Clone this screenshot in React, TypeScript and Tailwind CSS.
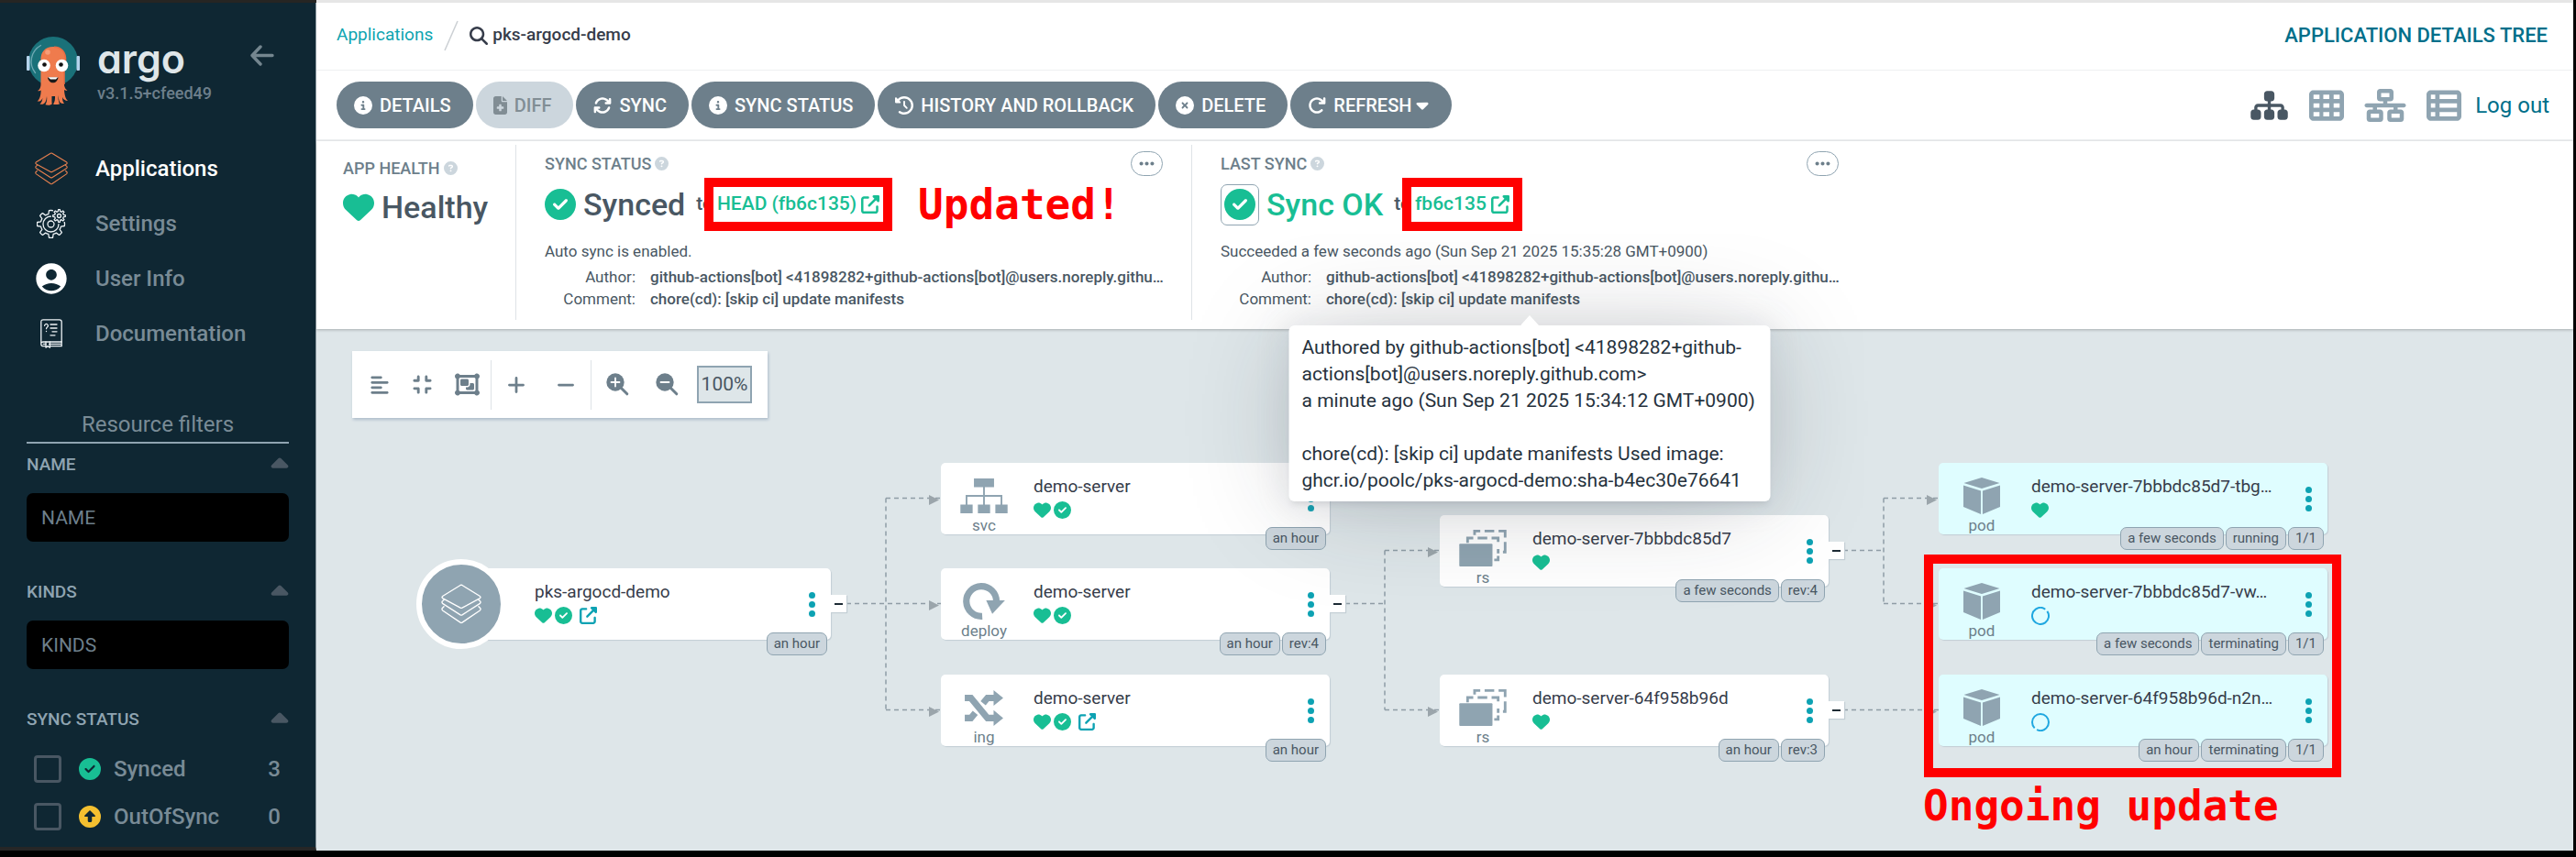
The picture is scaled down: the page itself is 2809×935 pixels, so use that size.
import React from "react";
import {
  FaAlignLeft,
  FaArrowRotateRight,
  FaArrowsRotate,
  FaCaretDown,
  FaCaretUp,
  FaCircleCheck,
  FaCircleInfo,
  FaCircleQuestion,
  FaCircleUp,
  FaCircleXmark,
  FaClockRotateLeft,
  FaCompress,
  FaEllipsis,
  FaFileMedical,
  FaHeart,
  FaMagnifyingGlass,
  FaMinus,
  FaNetworkWired,
  FaObjectGroup,
  FaPlus,
  FaSitemap,
  FaTableCells,
  FaTableList,
  FaUpRightFromSquare,
} from "react-icons/fa6";
import { MdAccountCircle } from "react-icons/md";

/* ---------- drawings ---------- */

function ArgoMascot() {
  return (
    <svg viewBox="0 0 58 75" className="h-[75px] w-[58px] shrink-0" aria-hidden="true">
      <circle cx="29" cy="27" r="27" fill="#1a7179" />
      <path d="M15.500 9.500A20 20 0 0 0 9.500 39.500" fill="none" stroke="#6fa9b3" strokeWidth="1.300" strokeLinecap="round" />
      <rect x="0" y="21" width="3.500" height="16" rx="1" fill="#b5d3ec" />
      <rect x="54.500" y="21" width="3.500" height="16" rx="1" fill="#b5d3ec" />
      <path
        d="M15.500 26C15 17 20 11 29 11s14 6 13.500 15c-.3 5-1.500 8-1.500 12v15c.5 3 2 5 3.500 5.500-1.500.5-2.500.3-3.500-.5.300 5 1.500 10 4 12-3-.2-5-1.500-6-4 0 3 .500 5 2 7-3 .5-4.500-1-5.500-3-.500-2-.800-4-1-6-.200 3 0 6 1.500 9.500-3 .8-5.500.8-7 0C31 71 31 68 31 65h-3.500c0 3-.2 6 .2 8.500-2 1.500-5 1.500-7.200.8 1.700-3.300 2-6 1.500-9.300-.2 2.500-.7 5-1.700 6.500-1.300 2-3.300 2.800-5.800 2 1.800-1.500 2.600-3.500 2.900-6.500-1.200 2.800-3 4-5.900 3.500 3-2 4-6.500 4.200-12-1 .8-2.200 1-3.700.5 2-.8 3.200-3 3.500-6V38c0-4-1.200-7-1.500-12z"
        fill="#ef7b4d"
      />
      <path d="M30 11.200c8 0 13 6 12.500 14.800-.3 5-1.500 8-1.500 12v14" fill="none" stroke="#e96d44" strokeWidth="1.500" />
      <circle cx="23" cy="17" r="2.800" fill="#f79d78" />
      <circle cx="19" cy="31.500" r="6.800" fill="#fff" />
      <circle cx="38.500" cy="31.500" r="6.800" fill="#fff" />
      <circle cx="19.500" cy="30.500" r="2.300" fill="#111" />
      <circle cx="37.500" cy="30.500" r="2.300" fill="#111" />
      <path d="M23 44.500h11.500c-.5 3.500-3 5.800-5.700 5.800S23.500 48 23 44.500z" fill="#1b1b1b" />
      <path d="M23.500 44.300h10.500l-2 2.200h-6z" fill="#fff" />
    </svg>
  );
}

function LayersIcon({ className }: { className: string }) {
  return (
    <svg viewBox="0 0 36 36" className={className} fill="none" stroke="currentColor" strokeWidth="1.100" strokeLinejoin="round" strokeLinecap="round" aria-hidden="true">
      <path d="M17.200 1.200 1.600 10.800q-1.600 1.100 0 2.200l15.600 8.400q.8.400 1.600 0L34.400 13q1.600-1.100 0-2.200L18.800 1.200q-.8-.4-1.600 0z" />
      <path d="M2.500 14.300 1.300 15.400q-1.200 1 .3 2.300l15.600 10q.8.400 1.600 0l15.600-10q1.500-1.300.3-2.300l-1.200-1.100" />
      <path d="M2.500 20.300 1.300 21.500q-1.200 1.200.3 2.400l15.600 10.600q.8.500 1.600 0l15.600-10.600q1.500-1.200.3-2.400l-1.200-1.200" />
    </svg>
  );
}

function gearPath(cx: number, cy: number, outer: number, inner: number, teeth: number) {
  const step = (Math.PI * 2) / teeth;
  const at = (r: number, a: number) => `${(cx + r * Math.cos(a)).toFixed(2)} ${(cy + r * Math.sin(a)).toFixed(2)}`;
  let d = "";
  for (let i = 0; i < teeth; i += 1) {
    const a = i * step + Math.PI / 2;
    d += `${i === 0 ? "M" : "L"}${at(inner, a - step * 0.3)}L${at(outer, a - step * 0.17)}A${outer} ${outer} 0 0 1 ${at(outer, a + step * 0.17)}L${at(inner, a + step * 0.3)}A${inner} ${inner} 0 0 1 ${at(inner, a + step * 0.7)}`;
  }
  return `${d}Z`;
}

function GearsIcon() {
  return (
    <svg viewBox="0 0 32 32" className="size-8" fill="none" stroke="#eef3f6" strokeWidth="1.300" strokeLinejoin="round" aria-hidden="true">
      <path d={gearPath(15.5, 16.5, 15, 11.3, 8)} />
      <circle cx="15.500" cy="16.500" r="8.500" />
      <circle cx="15.500" cy="16.500" r="3.500" />
      <circle cx="24.500" cy="7.500" r="8.800" fill="#0f2733" stroke="none" />
      <path d={gearPath(24.5, 7.5, 6.8, 4.9, 8)} />
      <circle cx="24.500" cy="7.500" r="2" />
    </svg>
  );
}

function DocsIcon() {
  return (
    <svg viewBox="0 0 24 32" className="h-8 w-6" fill="none" stroke="#eef3f6" strokeWidth="1.300" strokeLinecap="round" strokeLinejoin="round" aria-hidden="true">
      <path d="M.8 27V3.200Q.8.800 3.200.800h17.600q2.400 0 2.400 2.400V25H3.200Q.8 25 .8 27.200q0 2.500 2.400 2.500H6" />
      <path d="M11 29.700h12.200V25M9.500 27.300h12.500M3.200 27.300H6" />
      <path d="M6 25v6.200l2.200-1.800 2.200 1.800V25" />
      <path d="M4.600 7.300a1.900 1.900 0 1 1 2.900 1.700q-1 .6-1 1.700M6.500 13.300v.2M11 6h7M11 10h7M13 13.800h5M11 17.800h5" />
    </svg>
  );
}

function BackArrow() {
  return (
    <svg viewBox="0 0 26 23" className="h-[23px] w-[26px]" fill="none" stroke="#74868f" strokeWidth="3.400" strokeLinecap="round" strokeLinejoin="round" aria-hidden="true">
      <path d="M24 11.500H2.200M11 2 2 11.500 11 21" />
    </svg>
  );
}

function ZoomIcon({ plus }: { plus?: boolean }) {
  return (
    <svg viewBox="0 0 25 25" className="size-[25px]" fill="none" aria-hidden="true">
      <circle cx="10" cy="10" r="9.700" fill="#6d7f8b" />
      <path d="m16 16 6.800 6.800" stroke="#6d7f8b" strokeWidth="3" strokeLinecap="round" />
      <path d={plus ? "M5.500 10h9M10 5.500v9" : "M5.500 10h9"} stroke="#fff" strokeWidth="1.800" strokeLinecap="round" />
    </svg>
  );
}

function KindIcon({ kind }: { kind: string }) {
  if (kind === "svc") {
    return (
      <svg viewBox="0 0 54 42" className="h-[42px] w-[54px]" fill="#8fa4b1" aria-hidden="true">
        <path d="M15.500 1h23v10h-23zM0 31h14v10H0zM20 31h14v10H20zM40 31h14v10H40zM26 11h2v20h-2zM6 20h42v2H6zM6 20h2v11H6zM46 20h2v11h-2z" />
      </svg>
    );
  }
  if (kind === "deploy") {
    return (
      <svg viewBox="0 0 54 42" className="h-[42px] w-[54px]" aria-hidden="true">
        <path d="M25 38.200A17.200 17.200 0 1 1 41.200 21" fill="none" stroke="#8fa4b1" strokeWidth="7.500" />
        <path d="M29.500 20H51L36.500 35.500z" fill="#8fa4b1" />
      </svg>
    );
  }
  if (kind === "ing") {
    return (
      <svg viewBox="0 0 54 42" className="h-[42px] w-[54px]" aria-hidden="true">
        <path d="M5 10h7l19 23h8M5 33h7l5-6M26 16l5-6h8" fill="none" stroke="#8fa4b1" strokeWidth="7.500" />
        <path d="M38 1l11 9-11 9zM38 24l11 9-11 9z" fill="#8fa4b1" />
      </svg>
    );
  }
  if (kind === "rs") {
    return (
      <svg viewBox="0 0 54 42" className="h-[42px] w-[54px]" aria-hidden="true">
        <g fill="none" stroke="#8fa4b1" strokeWidth="3">
          <path d="M17.500 6V1.500H24M29 1.500h11M45 1.500h7.500V9M52.500 14v11.500H50" />
          <path d="M9.500 15v-5.500H16M21 9.500h11M37 9.500h7.500V14M44.500 22v5M44.500 30v4.500H40" />
        </g>
        <rect x="0" y="16" width="38" height="26" rx="1" fill="#8fa4b1" />
      </svg>
    );
  }
  return (
    <svg viewBox="0 0 54 42" className="h-[42px] w-[54px]" fill="#8fa4b1" aria-hidden="true">
      <path d="M27 0 47.500 6.300 27 12.600 6.500 6.300zM6 9l20 6.200V42L6 33.500zM48 9l-20 6.200V42l20-8.500z" />
    </svg>
  );
}

function Spinner({ angle }: { angle: number }) {
  return (
    <svg viewBox="0 0 20 20" className="size-5" fill="none" aria-hidden="true">
      <circle cx="10" cy="10" r="9" stroke="#1fa7e0" strokeWidth="2" strokeDasharray="53.200 3.350" transform={`rotate(${angle} 10 10)`} />
    </svg>
  );
}

/* ---------- sidebar ---------- */

const navItems = [
  { label: "Applications", icon: <LayersIcon className="size-9 text-[#e8804f]" />, active: true },
  { label: "Settings", icon: <GearsIcon /> },
  { label: "User Info", icon: <MdAccountCircle className="size-10 text-white" /> },
  { label: "Documentation", icon: <DocsIcon /> },
];

function FilterHeading({ title }: { title: string }) {
  return (
    <div className="flex h-6 items-center justify-between text-[19px] font-medium text-[#8fa4b1]">
      <h3>{title}</h3>
      <FaCaretUp className="-mr-[5px] size-[30px] text-[#495763]" />
    </div>
  );
}

function FilterInput({ name }: { name: string }) {
  return (
    <section className="mb-[43px]">
      <FilterHeading title={name} />
      <input
        aria-label={name}
        placeholder={name}
        className="mt-[19px] block h-[53px] w-full rounded-[7px] bg-black px-4 text-[21px] text-white outline-none placeholder:text-[#6d7f8b]"
      />
    </section>
  );
}

function Sidebar() {
  return (
    <aside className="w-[345px] shrink-0 border-r border-b-4 border-[#8b989f] border-b-[#262626] bg-[#0f2733] px-[29px]">
      <div className="flex h-[151px] items-start pt-[37px]">
        <ArgoMascot />
        <div className="ml-[19px] flex flex-1 flex-col">
          <div className="flex justify-between">
            <span className="font-['Inter',sans-serif] text-[43px] leading-[48px] font-semibold text-[#dfe6e9] [font-feature-settings:'cv11']">argo</span>
            <button type="button" aria-label="Collapse sidebar" className="mt-[9px] mr-4 self-start">
              <BackArrow />
            </button>
          </div>
          <span className="pt-[2px] text-[18px] leading-6 font-medium text-[#6d7f8b]">v3.1.5+cfeed49</span>
        </div>
      </div>
      <nav>
        {navItems.map((item) => (
          <a key={item.label} href="#" className="flex h-[60px] items-center gap-7 pl-[7px]">
            <span className="flex w-10 justify-center">{item.icon}</span>
            <span className={item.active ? "text-2xl font-medium text-white" : "text-2xl font-medium text-[#798b96]"}>{item.label}</span>
          </a>
        ))}
      </nav>
      <h2 className="mt-[50px] mb-[11px] border-b-2 border-[#8fa4b1] text-center text-2xl leading-[38px] text-[#798b96]">Resource filters</h2>
      <FilterInput name="NAME" />
      <FilterInput name="KINDS" />
      <FilterHeading title="SYNC STATUS" />
      <div className="mt-4">
        {[
          { label: "Synced", count: 3, icon: <FaCircleCheck className="size-6 text-[#18be94]" /> },
          { label: "OutOfSync", count: 0, icon: <FaCircleUp className="size-6 text-[#f4c030]" /> },
        ].map((row) => (
          <label key={row.label} className="flex h-[52px] items-center pr-[9px] pl-2 text-2xl font-medium text-[#798b96]">
            <input type="checkbox" className="size-[30px] appearance-none rounded-[4px] border-[3px] border-[#495763]" />
            <span className="mr-[14px] ml-[19px]">{row.icon}</span>
            <span className="flex-1">{row.label}</span>
            <span>{row.count}</span>
          </label>
        ))}
      </div>
    </aside>
  );
}

/* ---------- header ---------- */

const actions = [
  { label: "DETAILS", icon: FaCircleInfo },
  { label: "DIFF", icon: FaFileMedical, disabled: true },
  { label: "SYNC", icon: FaArrowsRotate },
  { label: "SYNC STATUS", icon: FaCircleInfo },
  { label: "HISTORY AND ROLLBACK", icon: FaClockRotateLeft },
  { label: "DELETE", icon: FaCircleXmark },
  { label: "REFRESH", icon: FaArrowRotateRight, caret: true },
];

function TopBar() {
  return (
    <header>
      <div className="flex h-[74px] items-center border-b border-[#eef0f2] pr-7 pb-[2px] pl-[22px] text-[19px]">
        <a href="#" className="text-[#0da4b0]">Applications</a>
        <svg viewBox="0 0 16 34" className="mx-3 h-[34px] w-4" aria-hidden="true">
          <path d="M1 33 15 1" stroke="#ccd0d4" strokeWidth="1.500" />
        </svg>
        <FaMagnifyingGlass className="mr-[5px] size-5 text-[#363c4a]" />
        <span className="font-medium text-[#363c4a]">pks-argocd-demo</span>
        <h1 className="ml-auto text-[22px] font-medium text-[#006f8a]">APPLICATION DETAILS TREE</h1>
      </div>
      <div className="flex h-[77px] items-center border-b-2 border-[#eef0f2] pr-[26px] pl-[22px]">
        <div className="flex gap-[3px]">
          {actions.map((a) => (
            <button
              key={a.label}
              type="button"
              disabled={a.disabled}
              className={
                a.disabled
                  ? "flex h-[51px] items-center rounded-full bg-[#ccd6dd] pr-6 pl-[19px] text-[20px] font-medium text-[#818d94]"
                  : "flex h-[51px] items-center rounded-full bg-[#6d7f8b] pr-6 pl-[19px] text-[20px] font-medium text-white"
              }
            >
              <a.icon className={a.disabled ? "mr-2 h-5 w-[15px]" : "mr-2 size-5"} />
              {a.label}
              {a.caret && <FaCaretDown className="ml-1 h-[21px] w-4" />}
            </button>
          ))}
        </div>
        <div className="ml-auto flex items-center text-[#8fa4b1]">
          <button type="button" aria-label="Tree view" className="mr-[22px] text-[#495763]"><FaSitemap className="h-9 w-[43px]" /></button>
          <button type="button" aria-label="Pods view" className="mr-[22px]"><FaTableCells className="size-[38px]" /></button>
          <button type="button" aria-label="Network view" className="mr-[22px]"><FaNetworkWired className="h-9 w-[46px]" /></button>
          <button type="button" aria-label="List view" className="mr-[15px]"><FaTableList className="size-[38px]" /></button>
          <a href="#" className="text-2xl text-[#006f8a]">Log out</a>
        </div>
      </div>
    </header>
  );
}

/* ---------- status panel ---------- */

function PanelTitle({ title, more }: { title: string; more?: boolean }) {
  return (
    <div className="flex h-6 items-center text-[18px] font-medium text-[#6d7f8b]">
      <h2>{title}</h2>
      <FaCircleQuestion className="ml-1 size-[15px] text-[#ccd6dd]" />
      {more && (
        <button type="button" aria-label="More" className="ml-auto flex h-[27px] w-[35px] items-center justify-center rounded-full border border-[#8fa4b1]">
          <FaEllipsis className="size-[19px]" />
        </button>
      )}
    </div>
  );
}

function RevisionLink({ text, note }: { text: string; note?: string }) {
  return (
    <span className="relative ml-1 flex items-center">
      <a href="#" className="flex items-center gap-[5px] text-[21px] font-medium text-[#18be94]">
        {text}
        <FaUpRightFromSquare className="size-5" />
      </a>
      <span className="pointer-events-none absolute -inset-x-[14px] -inset-y-[13px] border-[10px] border-[#ff0000]" />
      {note && (
        <span className="absolute left-full ml-[42px] font-['DejaVu_Sans_Mono',monospace] text-[46px] leading-none font-bold text-[#ff0000]">{note}</span>
      )}
    </span>
  );
}

function CommitInfo() {
  return (
    <dl className="mt-1 grid grid-cols-[99px_minmax(0,1fr)] gap-x-4 text-[17px] leading-6">
      <dt className="text-right">Author:</dt>
      <dd className="font-medium whitespace-nowrap">github-actions[bot] &lt;41898282+github-actions[bot]@users.noreply.githu…</dd>
      <dt className="text-right">Comment:</dt>
      <dd className="font-medium whitespace-nowrap">chore(cd): [skip ci] update manifests</dd>
    </dl>
  );
}

function CommitTooltip() {
  return (
    <div
      role="tooltip"
      className="absolute top-[197px] left-1/2 z-20 w-[525px] -translate-x-1/2 rounded-[6px] bg-white px-[14px] pt-[10px] pb-2 text-[21px] leading-[29px] text-[#26323d] shadow-[0_0_30px_6px_rgba(154,161,177,0.15),0_6px_120px_-12px_rgba(36,40,47,0.25),0_6px_6px_-3px_rgba(91,94,105,0.15)]"
    >
      <span className="absolute -top-[11px] left-1/2 -ml-[10px] h-[11px] w-5 bg-white [clip-path:polygon(50%_0,100%_100%,0_100%)]" />
      <p>
        Authored by github-actions[bot] &lt;41898282+github-
        <br />
        actions[bot]@users.noreply.github.com&gt;
      </p>
      <p>a minute ago (Sun Sep 21 2025 15:34:12 GMT+0900)</p>
      <p className="mt-[29px]">
        chore(cd): [skip ci] update manifests Used image:
        <br />
        ghcr.io/poolc/pks-argocd-demo:sha-b4ec30e76641
      </p>
    </div>
  );
}

function StatusPanel() {
  return (
    <section className="relative z-10 flex bg-white pt-1 pb-[10px] text-[#495763] shadow-[0_1px_3px_rgba(0,0,0,0.25)]">
      <div className="w-[217px] pt-[13px] pl-[29px]">
        <PanelTitle title="APP HEALTH" />
        <div className="mt-[9px] flex h-11 items-center text-[34px] font-medium">
          <FaHeart className="mr-2 size-[34px] text-[#18be94]" />
          Healthy
        </div>
      </div>
      <div className="w-[737px] border-l border-[#dee3e7] px-[31px] pt-2 pb-[11px]">
        <PanelTitle title="SYNC STATUS" more />
        <div className="mt-[11px] flex h-11 items-center text-[34px] font-medium">
          <FaCircleCheck className="mr-2 size-[34px] text-[#18be94]" />
          Synced
          <span className="ml-3 text-[21px]">to</span>
          <RevisionLink text="HEAD (fb6c135)" note="Updated!" />
        </div>
        <p className="mt-[17px] text-[17px] leading-6">Auto sync is enabled.</p>
        <CommitInfo />
      </div>
      <div className="relative w-[737px] border-l border-[#dee3e7] px-[31px] pt-2 pb-[11px]">
        <PanelTitle title="LAST SYNC" more />
        <div className="mt-[11px] flex h-11 items-center text-[34px] font-medium text-[#18be94]">
          <button type="button" aria-label="Show operation" className="mr-2 flex h-[45px] w-[42px] items-center justify-center rounded-[7px] border border-[#8fa4b1]">
            <FaCircleCheck className="size-[34px]" />
          </button>
          Sync OK
          <span className="ml-3 text-[21px] text-[#495763]">to</span>
          <RevisionLink text="fb6c135" />
        </div>
        <p className="mt-[17px] text-[17px] leading-6">Succeeded a few seconds ago (Sun Sep 21 2025 15:35:28 GMT+0900)</p>
        <CommitInfo />
        <CommitTooltip />
      </div>
    </section>
  );
}

/* ---------- resource tree ---------- */

type Node = {
  id: string;
  x: number;
  y: number;
  kind: string;
  name: string;
  icons: string[];
  tags: string[];
  collapse?: boolean;
  spin?: number;
};

const nodes: Node[] = [
  { id: "root", x: 137, y: 261, kind: "app", name: "pks-argocd-demo", icons: ["heart", "check", "link"], tags: ["an hour"], collapse: true },
  { id: "svc", x: 681, y: 146, kind: "svc", name: "demo-server", icons: ["heart", "check"], tags: ["an hour"] },
  { id: "deploy", x: 681, y: 261, kind: "deploy", name: "demo-server", icons: ["heart", "check"], tags: ["an hour", "rev:4"], collapse: true },
  { id: "ing", x: 681, y: 377, kind: "ing", name: "demo-server", icons: ["heart", "check", "link"], tags: ["an hour"] },
  { id: "rs4", x: 1225, y: 203, kind: "rs", name: "demo-server-7bbbdc85d7", icons: ["heart"], tags: ["a few seconds", "rev:4"], collapse: true },
  { id: "rs3", x: 1225, y: 377, kind: "rs", name: "demo-server-64f958b96d", icons: ["heart"], tags: ["an hour", "rev:3"], collapse: true },
  { id: "pod1", x: 1769, y: 146, kind: "pod", name: "demo-server-7bbbdc85d7-tbg…", icons: ["heart"], tags: ["a few seconds", "running", "1/1"] },
  { id: "pod2", x: 1769, y: 261, kind: "pod", name: "demo-server-7bbbdc85d7-vw…", icons: ["spin"], spin: -35, tags: ["a few seconds", "terminating", "1/1"] },
  { id: "pod3", x: 1769, y: 377, kind: "pod", name: "demo-server-64f958b96d-n2n…", icons: ["spin"], spin: 135, tags: ["an hour", "terminating", "1/1"] },
];

const edges = [
  "M578 299.500H681",
  "M621 184.500V415.500M621 184.500H681M621 415.500H681",
  "M1122 299.500H1165M1165 241.500V415.500M1165 241.500H1225M1165 415.500H1225",
  "M1665 241.500H1709M1709 184.500V299.500M1709 184.500H1769M1709 299.500H1769",
  "M1665 415.500H1769",
];

const arrowHeads = [
  [668, 184], [668, 299], [668, 415], [1212, 241], [1212, 415], [1756, 184], [1756, 299], [1756, 415],
];

function StatusIcon({ type, angle }: { type: string; angle?: number }) {
  if (type === "heart") return <FaHeart className="size-[19px] text-[#18be94]" />;
  if (type === "check") return <FaCircleCheck className="size-[19px] text-[#18be94]" />;
  if (type === "spin") return <Spinner angle={angle ?? 0} />;
  return <FaUpRightFromSquare className="ml-[5px] size-[19px] text-[#0da2b3]" />;
}

function NodeCard({ node }: { node: Node }) {
  const isPod = node.kind === "pod";
  return (
    <article
      style={{ left: node.x, top: node.y }}
      className={
        isPod
          ? "absolute flex h-[78px] w-[424px] rounded-[5px] bg-[#dffdff] shadow-[1px_1px_1px_#c3ced5]"
          : "absolute flex h-[78px] w-[424px] rounded-[5px] bg-white shadow-[1px_1px_1px_#c3ced5]"
      }
    >
      {node.kind === "app" ? (
        <div className="absolute -top-[10px] -left-[28px] flex size-[98px] items-center justify-center rounded-full border-[6px] border-white bg-[#8fa4b1] text-white">
          <LayersIcon className="size-[44px]" />
        </div>
      ) : null}
      <div className="flex w-[94px] shrink-0 flex-col items-center pt-4 text-[17px] leading-5 text-[#6d7f8b]">
        {node.kind !== "app" && (
          <>
            <KindIcon kind={node.kind} />
            <span className="mt-[2px]">{node.kind}</span>
          </>
        )}
      </div>
      <div className="min-w-0 flex-1 pt-[14px] pl-[7px]">
        <h3 className="text-[19px] leading-6 whitespace-nowrap text-[#363c4a]">{node.name}</h3>
        <div className="mt-1 flex items-center gap-[3px]">
          {node.icons.map((t) => (
            <StatusIcon key={t} type={t} angle={node.spin} />
          ))}
        </div>
      </div>
      <button type="button" aria-label="Node menu" className="mr-[17px] flex flex-col items-center justify-center gap-[3px]">
        <span className="size-[7px] rounded-full bg-[#0da2b3]" />
        <span className="size-[7px] rounded-full bg-[#0da2b3]" />
        <span className="size-[7px] rounded-full bg-[#0da2b3]" />
      </button>
      {node.collapse && (
        <button type="button" aria-label="Collapse" className="absolute top-[29px] left-full flex h-[19px] w-[17px] items-center justify-center bg-white shadow-[1px_1px_1px_#c3ced5]">
          <span className="h-[2px] w-[9px] bg-[#1d2b34]" />
        </button>
      )}
      <div className="absolute top-[70px] right-[4px] flex gap-[2px] text-[15px] text-[#495763]">
        {node.tags.map((t) => (
          <span key={t} className="flex h-[25px] items-center rounded-[7px] border border-[#8fa4b1] bg-[#ccd6dd] px-[7px] whitespace-nowrap">
            {t}
          </span>
        ))}
      </div>
    </article>
  );
}

function GraphToolbar() {
  return (
    <div className="mt-6 ml-[39px] flex h-[73px] w-[453px] items-center bg-white pl-[19px] text-[#6d7f8b] shadow-[1px_2px_3px_#aebccb]">
      <button type="button" aria-label="Align" className="mr-6"><FaAlignLeft className="size-[22px]" /></button>
      <button type="button" aria-label="Compact" className="mr-6"><FaCompress className="size-[23px]" /></button>
      <button type="button" aria-label="Group" className="mr-3"><FaObjectGroup className="size-[27px]" /></button>
      <span className="h-[54px] w-px bg-[#dee3e7]" />
      <button type="button" aria-label="Expand all" className="mr-8 ml-4"><FaPlus className="size-[22px]" /></button>
      <button type="button" aria-label="Collapse all" className="mr-4"><FaMinus className="size-[22px]" /></button>
      <span className="h-[54px] w-px bg-[#dee3e7]" />
      <button type="button" aria-label="Zoom in" className="mr-[29px] ml-4"><ZoomIcon plus /></button>
      <button type="button" aria-label="Zoom out" className="mr-5"><ZoomIcon /></button>
      <span className="flex h-[41px] w-[60px] items-center justify-center border-2 border-[#8fa4b1] bg-[#dee6e9] text-[21px] text-[#495763]">100%</span>
    </div>
  );
}

function ResourceTree() {
  return (
    <section className="relative flex-1 overflow-hidden bg-[#dee6e9]">
      <GraphToolbar />
      <svg className="absolute inset-0 size-full" fill="none" aria-hidden="true">
        {edges.map((d) => (
          <path key={d} d={d} stroke="#8f9da6" strokeWidth="1.500" strokeDasharray="5 4" />
        ))}
        {arrowHeads.map(([x, y]) => (
          <path key={`${x}-${y}`} d={`M${x} ${y - 3}l11 5.500-11 5.500z`} fill="#9ba5ab" />
        ))}
      </svg>
      {nodes.map((n) => (
        <NodeCard key={n.id} node={n} />
      ))}
      <div className="pointer-events-none absolute top-[246px] left-[1753px] h-[243px] w-[455px] border-[10px] border-[#ff0000]" />
      <p className="absolute top-[497px] left-[1752px] font-['DejaVu_Sans_Mono',monospace] text-[46px] leading-none font-bold text-[#ff0000]">Ongoing update</p>
    </section>
  );
}

export default function App() {
  return (
    <div className="flex min-h-screen flex-col bg-black pb-[7px] font-['Roboto',sans-serif]">
      <div className="flex h-[3px] pr-[3px]">
        <div className="w-[345px] bg-[#262523]" />
        <div className="flex-1 bg-[#e6e6e6]" />
      </div>
      <div className="flex flex-1 pr-[3px]">
        <Sidebar />
        <main className="flex min-w-0 flex-1 flex-col bg-white">
          <TopBar />
          <StatusPanel />
          <ResourceTree />
        </main>
      </div>
    </div>
  );
}
